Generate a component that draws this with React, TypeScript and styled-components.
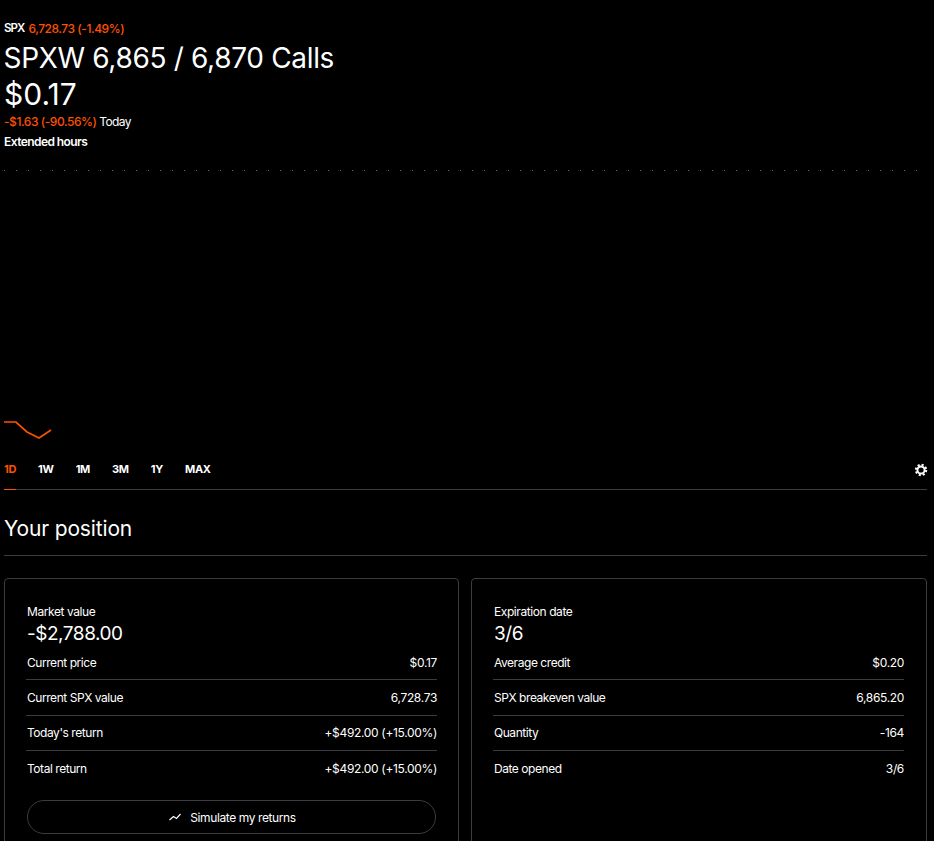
import styled, { createGlobalStyle } from "styled-components";

const ORANGE = "#ff5000";
const LINE = "#3a3c3f";

const GlobalStyle = createGlobalStyle`
  html, body {
    margin: 0;
    height: 100%;
    background: #000;
    overflow: hidden;
  }
  body {
    color: #fff;
    font-family: Inter, "Liberation Sans", sans-serif;
  }
`;

const Page = styled.main`
  width: 923px;
  padding: 20px 0 0 4px;
`;

const Ticker = styled.div`
  display: flex;
  align-items: center;
  gap: 4px;
  height: 17px;
  font-size: 12px;
  line-height: 17px;
`;
const TickerName = styled.span`
  font-size: 11.5px;
  font-weight: 600;
  letter-spacing: -0.9px;
`;
const Orange = styled.span`
  color: ${ORANGE};
  font-weight: 500;
  letter-spacing: -0.45px;
`;
const Title = styled.h1`
  margin: 3px 0 0 -0.5px;
  font-size: 28px;
  line-height: 36px;
  font-weight: 400;
  letter-spacing: -0.33px;
`;
const Price = styled.div`
  font-size: 30px;
  line-height: 36px;
`;
const Change = styled.div`
  margin-top: 1px;
  font-size: 12px;
  line-height: 18px;
  letter-spacing: -0.6px;
`;
const Session = styled.div`
  margin-top: 2px;
  font-size: 12px;
  line-height: 18px;
  font-weight: 600;
  letter-spacing: -0.57px;
`;

const Chart = styled.svg`
  display: block;
  width: 923px;
  height: 300px;
`;

const Ranges = styled.nav`
  display: flex;
  gap: 22px;
  height: 38px;
  border-bottom: 1px solid ${LINE};
`;
const Range = styled.a<{ $active?: boolean }>`
  position: relative;
  display: flex;
  align-items: center;
  flex: none;
  padding-bottom: 2px;
  font-size: 11px;
  font-weight: 700;
  letter-spacing: -0.3px;
  color: ${(p) => (p.$active ? ORANGE : "#fff")};
  &::after {
    content: "";
    display: ${(p) => (p.$active ? "block" : "none")};
    position: absolute;
    left: 0;
    right: 0;
    bottom: -1px;
    height: 1px;
    background: ${ORANGE};
  }
`;
const ChartSettings = styled.button`
  display: flex;
  align-items: center;
  margin-left: auto;
  margin-right: -1px;
  padding: 0 0 1px;
  border: 0;
  background: none;
`;

const SectionTitle = styled.h2`
  margin: 0;
  padding: 23px 0 11px;
  font-size: 21px;
  line-height: 31px;
  font-weight: 400;
  letter-spacing: -0.15px;
  border-bottom: 1px solid ${LINE};
`;

const Cards = styled.section`
  display: grid;
  grid-template-columns: 455px 456px;
  gap: 12px;
  margin-top: 22px;
`;
const Card = styled.article`
  height: 300px;
  box-sizing: border-box;
  padding: 24px 21px 0;
  border: 1px solid ${LINE};
  border-radius: 4px;
  &:last-child {
    padding-right: 22px;
  }
`;
const CardLabel = styled.div`
  padding-left: 1px;
  font-size: 12px;
  line-height: 18px;
  letter-spacing: -0.42px;
`;
const CardValue = styled.div`
  margin-bottom: -1px;
  padding-left: 1px;
  font-size: 19px;
  line-height: 25px;
  letter-spacing: -0.47px;
`;
const Row = styled.div`
  display: flex;
  justify-content: space-between;
  align-items: center;
  height: 35.33px;
  box-sizing: border-box;
  padding-left: 1px;
  font-size: 12px;
  border-bottom: 1px solid ${LINE};
  &:last-of-type {
    border-bottom: 0;
  }
`;
const RowLabel = styled.span`
  letter-spacing: -0.45px;
`;
const RowValue = styled.span`
  letter-spacing: -0.33px;
`;
const Simulate = styled.button`
  display: flex;
  align-items: center;
  justify-content: center;
  gap: 9px;
  width: calc(100% - 2px);
  height: 34px;
  margin: 14px 0 0 1px;
  padding: 0 0 0 2px;
  border: 1px solid ${LINE};
  border-radius: 17px;
  background: none;
  color: #fff;
  font: inherit;
  font-size: 12px;
  letter-spacing: -0.4px;
`;

const ticks = Array.from({ length: 77 }, (_, i) => i * 12);

const leftRows = [
  ["Current price", "$0.17"],
  ["Current SPX value", "6,728.73"],
  ["Today's return", "+$492.00 (+15.00%)"],
  ["Total return", "+$492.00 (+15.00%)"],
];
const rightRows = [
  ["Average credit", "$0.20"],
  ["SPX breakeven value", "6,865.20"],
  ["Quantity", "-164"],
  ["Date opened", "3/6"],
];

const Rows = ({ rows }: { rows: string[][] }) => (
  <>
    {rows.map(([label, value]) => (
      <Row key={label}>
        <RowLabel>{label}</RowLabel>
        <RowValue>{value}</RowValue>
      </Row>
    ))}
  </>
);

const GearIcon = () => (
  <svg width="14" height="14" viewBox="0 0 14 14" fill="none" stroke="#fff">
    <circle cx="7" cy="7" r="3.6" strokeWidth="2" />
    <circle cx="7" cy="7" r="5.2" strokeWidth="2" strokeDasharray="2.08 2" />
  </svg>
);

export default function App() {
  return (
    <Page>
      <GlobalStyle />
      <Ticker>
        <TickerName>SPX</TickerName>
        <Orange>6,728.73 (-1.49%)</Orange>
      </Ticker>
      <Title>SPXW 6,865 / 6,870 Calls</Title>
      <Price>$0.17</Price>
      <Change>
        <Orange>-$1.63 (-90.56%)</Orange> Today
      </Change>
      <Session>Extended hours</Session>

      <Chart viewBox="0 0 923 300">
        {ticks.map((x) => (
          <rect key={x} x={x} y="19" width="1" height="1" fill="#666" />
        ))}
        <polyline
          points="0,271 12,271 23,281 35,287 47,279"
          fill="none"
          stroke={ORANGE}
          strokeWidth="1.7"
        />
      </Chart>

      <Ranges>
        <Range $active>1D</Range>
        <Range>1W</Range>
        <Range>1M</Range>
        <Range>3M</Range>
        <Range>1Y</Range>
        <Range>MAX</Range>
        <ChartSettings aria-label="Chart settings">
          <GearIcon />
        </ChartSettings>
      </Ranges>

      <SectionTitle>Your position</SectionTitle>

      <Cards>
        <Card>
          <CardLabel>Market value</CardLabel>
          <CardValue>-$2,788.00</CardValue>
          <Rows rows={leftRows} />
          <Simulate>
            <svg width="12" height="8" viewBox="0 0 12 8" fill="none" stroke="#fff" strokeWidth="1.2">
              <path d="M0.5 7 L4.5 3.5 L7.5 5.5 L11.5 1" />
            </svg>
            Simulate my returns
          </Simulate>
        </Card>
        <Card>
          <CardLabel>Expiration date</CardLabel>
          <CardValue>3/6</CardValue>
          <Rows rows={rightRows} />
        </Card>
      </Cards>
    </Page>
  );
}
